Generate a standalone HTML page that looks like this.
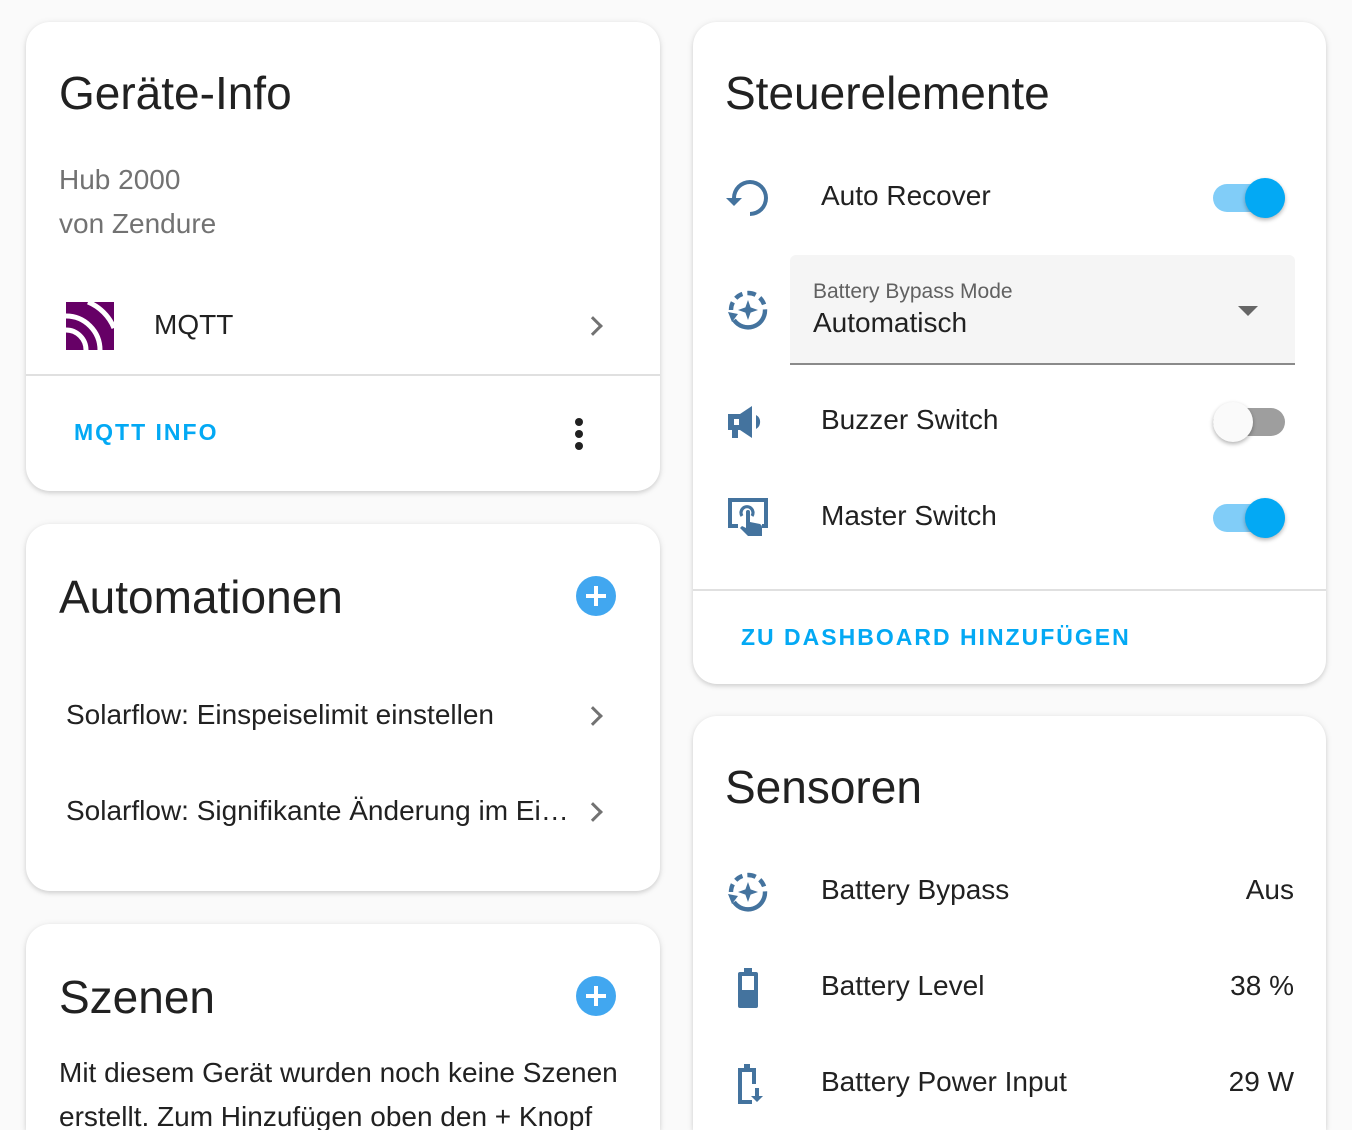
<!DOCTYPE html>
<html style="height:1130px;overflow:hidden"><head><meta charset="utf-8"><style>
*{box-sizing:border-box;margin:0;padding:0}
body{width:1352px;height:1130px;background:#fafafa;font-family:"Liberation Sans",sans-serif;color:#212121;position:relative;overflow:hidden}
.card{position:absolute;background:#fff;border-radius:24px;box-shadow:0 2px 4px rgba(0,0,0,.12),0 1px 8px rgba(0,0,0,.08);overflow:hidden}
.a{position:absolute;white-space:nowrap}
.t{font-size:46px;color:#212121}
.b{font-size:28px;color:#212121}
.ic{position:absolute;width:48px;height:48px}
.sw{position:absolute;width:72px;height:28px;border-radius:14px}
.kn{position:absolute;width:40px;height:40px;border-radius:50%;top:-6px;box-shadow:0 2px 4px rgba(0,0,0,.3)}
.chev{position:absolute;width:14px;height:14px;border-right:3px solid #727272;border-top:3px solid #727272;transform:rotate(45deg)}
.plus{position:absolute;width:40px;height:40px;border-radius:50%;background:#41a7f0}
.plus:before{content:"";position:absolute;left:10px;top:18px;width:20px;height:4px;background:#fff}
.plus:after{content:"";position:absolute;left:18px;top:10px;width:4px;height:20px;background:#fff}
.btn{font-size:23px;color:#03a9f4;letter-spacing:2px;font-weight:bold}
.r{right:32px;text-align:right}
</style></head><body>

<div class="card" style="left:26px;top:22px;width:634px;height:469px">
  <div class="a t" style="left:33px;top:44px">Geräte-Info</div>
  <div class="a b" style="left:33px;top:142px;color:#727272">Hub 2000</div>
  <div class="a b" style="left:33px;top:186px;color:#727272">von Zendure</div>
  <svg class="a" style="left:40px;top:280px" width="48" height="48" viewBox="0 0 48 48">
    <rect width="48" height="48" fill="#660066"/>
    <path d="M0 14 A34 34 0 0 1 34 48" stroke="#fff" stroke-width="5" fill="none"/>
    <path d="M0 28 A20 20 0 0 1 20 48" stroke="#fff" stroke-width="5" fill="none"/>
    <path d="M22 0 A48 48 0 0 1 48 26" stroke="#fff" stroke-width="5" fill="none"/>
  </svg>
  <div class="a b" style="left:128px;top:287px">MQTT</div>
  <div class="chev" style="left:560px;top:297px"></div>
  <div class="a" style="left:0;top:352px;width:634px;height:2px;background:#e0e0e0"></div>
  <div class="a btn" style="left:48px;top:397px">MQTT INFO</div>
  <div class="a" style="left:549px;top:396px;width:8px;height:8px;border-radius:50%;background:#212121"></div>
  <div class="a" style="left:549px;top:408px;width:8px;height:8px;border-radius:50%;background:#212121"></div>
  <div class="a" style="left:549px;top:420px;width:8px;height:8px;border-radius:50%;background:#212121"></div>
</div>

<div class="card" style="left:26px;top:524px;width:634px;height:367px">
  <div class="a t" style="left:33px;top:46px">Automationen</div>
  <div class="plus" style="left:550px;top:52px"></div>
  <div class="a b" style="left:40px;top:175px">Solarflow: Einspeiselimit einstellen</div>
  <div class="chev" style="left:560px;top:185px"></div>
  <div class="a b" style="left:40px;top:271px;width:508px;overflow:hidden;text-overflow:ellipsis">Solarflow: Signifikante Änderung im Einspeiselimit</div>
  <div class="chev" style="left:560px;top:281px"></div>
</div>

<div class="card" style="left:26px;top:924px;width:634px;height:206px;border-radius:24px 24px 0 0">
  <div class="a t" style="left:33px;top:46px">Szenen</div>
  <div class="plus" style="left:550px;top:52px"></div>
  <div class="a b" style="left:33px;top:133px">Mit diesem Gerät wurden noch keine Szenen</div>
  <div class="a b" style="left:33px;top:177px">erstellt. Zum Hinzufügen oben den + Knopf</div>
</div>

<div class="card" style="left:693px;top:22px;width:633px;height:662px">
  <div class="a t" style="left:32px;top:44px">Steuerelemente</div>
  <svg class="ic" style="left:31px;top:152px" viewBox="0 0 24 24"><path fill="#44739e" d="M12 3a9 9 0 0 0-9 9H0l4 4 4-4H5a7 7 0 1 1 7 7v2a9 9 0 0 0 0-18z" transform="translate(1 0)"/></svg>
  <div class="a b" style="left:128px;top:158px">Auto Recover</div>
  <div class="sw" style="left:520px;top:162px;background:#81cdf8"><div class="kn" style="left:32px;background:#03a9f4"></div></div>

  <div class="a" style="left:97px;top:233px;width:505px;height:110px;background:#f5f5f5;border-radius:6px 6px 0 0;border-bottom:2px solid #8a8a8a"></div>
  <svg class="ic" style="left:31px;top:264px" viewBox="0 0 24 24"><g fill="none" stroke="#44739e" stroke-width="2.2"><path d="M12 3.5a8.5 8.5 0 0 1 8.5 8.5" stroke-dasharray="4 2.5"/><path d="M3.5 12A8.5 8.5 0 0 1 12 3.5" stroke-dasharray="4 2.5"/><path d="M20.5 12A8.5 8.5 0 0 1 5 17"/></g><path fill="#44739e" d="M2 13l5 1-3 4zM12 7l1.3 3.7L17 12l-3.7 1.3L12 17l-1.3-3.7L7 12l3.7-1.3z"/></svg>
  <div class="a" style="left:120px;top:258px;font-size:21px;color:#616161">Battery Bypass Mode</div>
  <div class="a b" style="left:120px;top:285px">Automatisch</div>
  <div class="a" style="left:545px;top:284px;width:0;height:0;border-left:10px solid transparent;border-right:10px solid transparent;border-top:10px solid #666"></div>

  <svg class="ic" style="left:31px;top:376px" viewBox="0 0 24 24"><path fill="#44739e" d="M2 8h6l6-4v16l-6-4H7v4H4v-4H2zM16 8.5a4 4 0 0 1 0 7z"/><path fill="#fff" d="M5 10.5h2.5v3H5z"/></svg>
  <div class="a b" style="left:128px;top:382px">Buzzer Switch</div>
  <div class="sw" style="left:520px;top:386px;background:#9e9e9e"><div class="kn" style="left:0;background:#fafafa"></div></div>

  <svg class="ic" style="left:31px;top:472px" viewBox="0 0 24 24"><path fill="none" stroke="#44739e" stroke-width="2" d="M7 16H3V3h18v13h-2"/><path fill="none" stroke="#44739e" stroke-width="1.6" d="M9 11a3 3 0 1 1 5 0"/><path fill="#44739e" d="M11 9a1 1 0 0 1 2 0v5l5 1a2 2 0 0 1 1 2v4h-7l-4-4 1-1 2 1z"/></svg>
  <div class="a b" style="left:128px;top:478px">Master Switch</div>
  <div class="sw" style="left:520px;top:482px;background:#81cdf8"><div class="kn" style="left:32px;background:#03a9f4"></div></div>

  <div class="a" style="left:0;top:567px;width:633px;height:2px;background:#e0e0e0"></div>
  <div class="a btn" style="left:48px;top:602px">ZU DASHBOARD HINZUFÜGEN</div>
</div>

<div class="card" style="left:693px;top:716px;width:633px;height:414px;border-radius:24px 24px 0 0">
  <div class="a t" style="left:32px;top:44px">Sensoren</div>
  <svg class="ic" style="left:31px;top:152px" viewBox="0 0 24 24"><g fill="none" stroke="#44739e" stroke-width="2.2"><path d="M12 3.5a8.5 8.5 0 0 1 8.5 8.5" stroke-dasharray="4 2.5"/><path d="M3.5 12A8.5 8.5 0 0 1 12 3.5" stroke-dasharray="4 2.5"/><path d="M20.5 12A8.5 8.5 0 0 1 5 17"/></g><path fill="#44739e" d="M2 13l5 1-3 4zM12 7l1.3 3.7L17 12l-3.7 1.3L12 17l-1.3-3.7L7 12l3.7-1.3z"/></svg>
  <div class="a b" style="left:128px;top:158px">Battery Bypass</div>
  <div class="a b r" style="top:158px">Aus</div>

  <svg class="ic" style="left:31px;top:248px" viewBox="0 0 24 24"><path fill="#44739e" d="M10 2h4v2h2a1 1 0 0 1 1 1v16a1 1 0 0 1-1 1H8a1 1 0 0 1-1-1V5a1 1 0 0 1 1-1h2z"/><rect x="9" y="6" width="6" height="7" fill="#fff"/></svg>
  <div class="a b" style="left:128px;top:254px">Battery Level</div>
  <div class="a b r" style="top:254px">38 %</div>

  <svg class="ic" style="left:31px;top:344px" viewBox="0 0 24 24"><path fill="none" stroke="#44739e" stroke-width="2" d="M15 12V5H8v16h6"/><path fill="#44739e" d="M10 2h3v3h-3zM15.5 14h2v4h2l-3 3-3-3h2z"/></svg>
  <div class="a b" style="left:128px;top:350px">Battery Power Input</div>
  <div class="a b r" style="top:350px">29 W</div>
</div>
</body></html>
